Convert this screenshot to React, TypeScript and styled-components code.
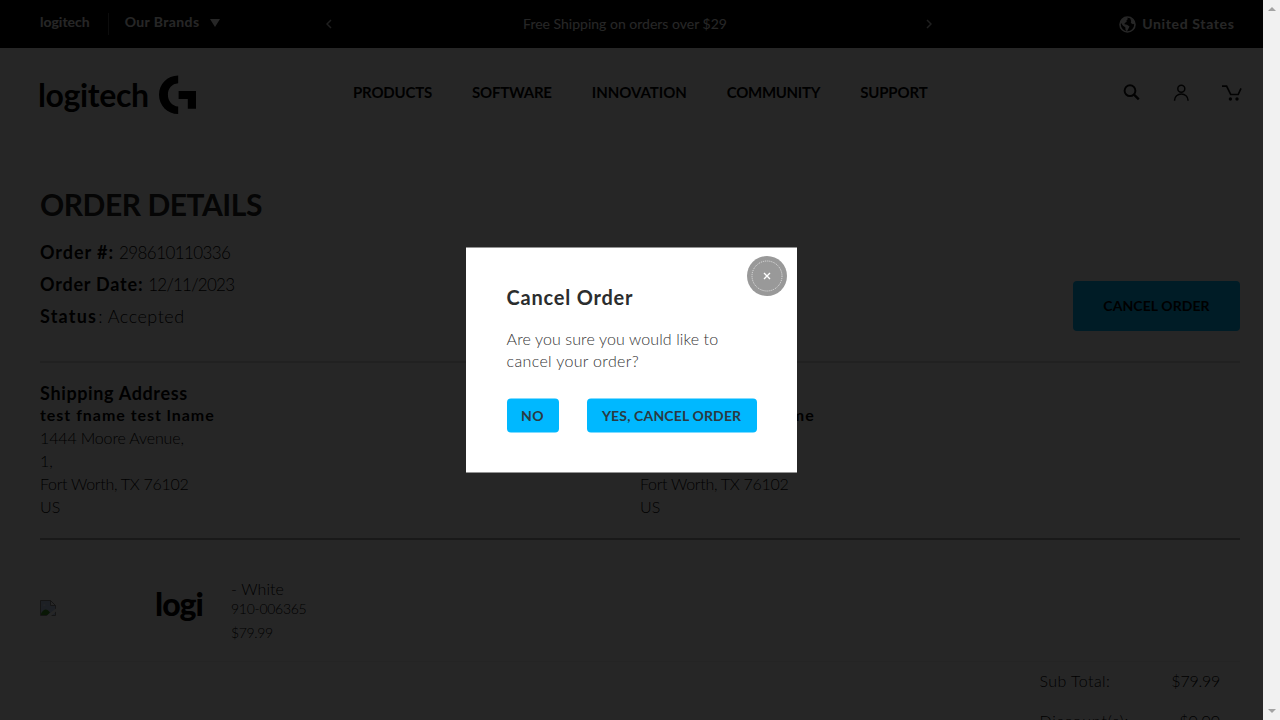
import React from "react";
import styled, { createGlobalStyle } from "styled-components";

const GlobalStyle = createGlobalStyle`
  * { box-sizing: border-box; }
  body { margin: 0; overflow: hidden; background: #fff; }
  button { cursor: pointer; }
`;

const Frame = styled.div`
  display: flex;
  width: 1280px;
  height: 720px;
  overflow: hidden;
  font-family: Lato, "Liberation Sans", sans-serif;
  color: #000;
`;

const Viewport = styled.div`
  position: relative;
  flex: 1;
  height: 720px;
  overflow: hidden;
  background: #fff;
`;

const Scrollbar = styled.div`
  display: flex;
  flex-direction: column;
  justify-content: space-between;
  align-items: center;
  width: 17px;
  padding: 7px 0;
  background: #f1f1f1;
`;

const Label = styled.span<{ $size?: number; $weight?: number; $track?: number; $line?: number }>`
  display: inline-block;
  white-space: pre;
  font-size: ${(p) => p.$size ?? 16}px;
  font-weight: ${(p) => p.$weight ?? 300};
  letter-spacing: ${(p) => p.$track ?? 0}px;
  line-height: ${(p) => p.$line ?? 23}px;
`;

const TopBar = styled.div`
  display: flex;
  height: 48px;
  padding: 0 28px 0 40px;
  background: #000;
  color: #fff;
`;

const Brands = styled.div`
  display: flex;
  align-items: flex-start;
  width: 286px;
  padding-top: 13px;
`;

const BrandRule = styled.div`
  width: 1px;
  height: 22px;
  margin: 0 16px 0 18px;
  background: #555;
`;

const Caret = styled.div`
  margin: 6px 0 0 11px;
  border: 5px solid transparent;
  border-top: 8px solid #fff;
  border-bottom: 0;
`;

const Promo = styled.div`
  display: flex;
  align-items: center;
  justify-content: space-between;
  width: 606px;
`;

const PromoText = styled.div`
  padding: 0 8px 2px 0;
`;

const Region = styled.div`
  display: flex;
  align-items: center;
  gap: 6px;
  margin-left: auto;
  padding: 0 0.5px 0 0;
`;

const RegionName = styled.div`
  padding-bottom: 1px;
`;

const Header = styled.header`
  display: flex;
  height: 138px;
  padding-left: 40px;
`;

const Logo = styled.div`
  display: flex;
  align-items: flex-start;
  width: 313px;
  padding-top: 27px;
`;

const Wordmark = styled.div`
  width: 121px;
  margin-left: -2px;
  padding-top: 1px;
`;

const Nav = styled.nav`
  display: flex;
  gap: 40px;
  padding-top: 34px;
`;

const Tools = styled.div`
  display: flex;
  gap: 31.5px;
  margin-left: auto;
  padding: 35px 21px 0 0;
`;

const Main = styled.main`
  padding: 0 23px 0 40px;
`;

const Title = styled.h1`
  margin: 0 0 14px;
  font-size: 30px;
  line-height: 36px;
  font-weight: 700;
  letter-spacing: -0.46px;
  color: #222;
`;

const Summary = styled.section`
  display: flex;
  justify-content: space-between;
  align-items: flex-end;
  height: 96px;
  margin-bottom: 29px;
`;

const Fact = styled.div`
  display: flex;
  align-items: baseline;
  gap: 1px;
  height: 32px;
`;

const CancelButton = styled.button`
  width: 167px;
  height: 50px;
  margin-bottom: 1px;
  padding: 0;
  border: 0;
  border-radius: 4px;
  background: #00b8fc;
  color: #000;
  font-family: inherit;
`;

const Rule = styled.hr<{ $shade: string; $size: number }>`
  height: ${(p) => p.$size}px;
  margin: 0;
  border: 0;
  background: ${(p) => p.$shade};
`;

const Addresses = styled.section`
  display: grid;
  grid-template-columns: 600px 600px;
  margin-top: 19px;
`;

const Address = styled.address`
  display: flex;
  flex-direction: column;
  align-items: flex-start;
  height: 156px;
  font-style: normal;
`;

const Item = styled.section`
  display: flex;
  height: 121px;
`;

const Thumb = styled.div`
  width: 115px;
  padding-top: 60px;
`;

const Vendor = styled.div`
  width: 76px;
  padding-top: 45px;
`;

const ItemText = styled.div`
  display: flex;
  flex-direction: column;
  padding-top: 38px;
`;

const Totals = styled.div`
  display: flex;
  flex-direction: column;
  width: 240.500px;
  margin-left: auto;
  padding: 0 20px 0 40px;
`;

const TotalRow = styled.div`
  display: flex;
  justify-content: space-between;
  height: 40px;
`;

const Overlay = styled.div`
  position: absolute;
  inset: 0;
  background: rgba(0, 0, 0, 0.85);
`;

const Dialog = styled.div`
  position: absolute;
  top: 50%;
  left: 466px;
  transform: translateY(-50%);
  width: 331.4px;
  height: 225px;
  padding: 37px 40px 0 40.6px;
  background: #fff;
  color: #2b2d2e;
`;

const DialogTitle = styled.h2`
  margin: 0 0 19px;
  font-size: 20px;
  line-height: 24px;
  font-weight: 700;
  letter-spacing: 0.78px;
`;

const Message = styled.p`
  display: flex;
  flex-direction: column;
  margin: 0 0 26.5px;
  color: #333;
`;

const Actions = styled.div`
  display: flex;
  gap: 28px;
`;

const Action = styled.button<{ $width: number }>`
  width: ${(p) => p.$width}px;
  height: 34px;
  padding: 0;
  border: 0;
  border-radius: 4px;
  background: #00b8ff;
  color: #2b3a42;
  font-family: inherit;
`;

const Close = styled.button`
  position: absolute;
  top: 8.5px;
  right: 10.7px;
  width: 40px;
  height: 40px;
  padding: 0;
  border: 0;
  background: none;
  svg { display: block; overflow: visible; }
`;

const Chevron = ({ right }: { right?: boolean }) => (
  <svg width="6" height="10" viewBox="0 0 6 10" fill="none" stroke="#ccc" strokeWidth="1.5">
    <path d={right ? "M1 1l4 4-4 4" : "M5 1L1 5l4 4"} />
  </svg>
);

const Globe = () => (
  <svg width="17" height="17" viewBox="0 0 17 17">
    <circle cx="8.5" cy="8.5" r="7.5" fill="none" stroke="#fff" strokeWidth="1.6" />
    <path fill="#fff" d="M3 3.4L7.600 1l1.300 2.100-1.500 1.300.300 1.300-1.900 1.200-.4 1.400 2.600.5 2.500 1.700-1.200 2.500-1.400 2.400-1.400-1.600-.2-2.600L4 9.700 1.600 6.200zM11 2l3.600 2.600 1 3-1.600.6-2.200-1.300.4-2z" />
  </svg>
);

const GMark = () => (
  <svg width="38" height="40" viewBox="0 0 38 40">
    <path d="M19.200.6v7.700C13 8.800 8.900 13.500 8.900 19.800S13 31 19.200 31.600v7.500C8.300 39 0 30.500 0 19.800S8.300.7 19.200.6zM19.600 16H37v17.700h-8.200V24h-9.200z" />
  </svg>
);

const SearchIcon = () => (
  <svg width="18" height="18" viewBox="0 0 18 18" fill="none" stroke="#111" strokeWidth="2">
    <circle cx="7" cy="7.7" r="5.4" />
    <path d="M11 11.700l4.800 4.700" strokeWidth="2.4" />
  </svg>
);

const UserIcon = () => (
  <svg width="18" height="18" viewBox="0 0 18 18" fill="none" stroke="#111" strokeWidth="1.5">
    <circle cx="8.3" cy="5.8" r="3.5" />
    <path d="M1.600 17.800v-.8a6.700 6 0 0 1 13.400 0v.8" />
  </svg>
);

const CartIcon = () => (
  <svg width="20" height="18" viewBox="0 0 20 18" fill="none" stroke="#111" strokeWidth="1.7">
    <path d="M0 3.200h4.600l4.100 8.300h7.500l2.800-6.200" />
    <circle cx="8.4" cy="16" r="1.7" fill="#111" stroke="none" />
    <circle cx="15" cy="16" r="1.7" fill="#111" stroke="none" />
  </svg>
);

const BrokenImage = () => (
  <svg width="16" height="16" viewBox="0 0 16 16">
    <path d="M.5.500h10l5 5v10H.5z" fill="#c3d4f5" stroke="#8c8c8c" />
    <path d="M10.500.500v5h5z" fill="#fff" stroke="#8c8c8c" />
    <path d="M3 5.500c.3-1.300 2.300-1.300 2.700 0z" fill="#fff" />
    <path d="M1 15v-1.500c3-5 6-5 9-1L7.500 15z" fill="#3c9b23" />
    <path d="M6.500 16L16 8.500v3L11 16z" fill="#fff" />
  </svg>
);

const ScrollArrow = ({ down }: { down?: boolean }) => (
  <svg width="8" height="4" viewBox="0 0 8 4">
    <path d={down ? "M0 0h8L4 4z" : "M0 4h8L4 0z"} fill="#a3a3a3" />
  </svg>
);

const menu: [string, number][] = [
  ["PRODUCTS", -0.19],
  ["SOFTWARE", -0.24],
  ["INNOVATION", -0.03],
  ["COMMUNITY", -0.3],
  ["SUPPORT", -0.15],
];

const AddressBlock = ({ heading }: { heading: string }) => (
  <Address>
    <Label $size={18} $weight={700} $track={0.64} $line={22}>{heading}</Label>
    <Label $weight={700} $track={0.97} $line={22}>test fname test lname</Label>
    <Label $track={-0.15}>1444 Moore Avenue,</Label>
    <Label>1,</Label>
    <Label $track={-0.28}>Fort Worth, TX 76102</Label>
    <Label>US</Label>
  </Address>
);

export default function App() {
  return (
    <Frame>
      <GlobalStyle />
      <Viewport>
        <TopBar>
          <Brands>
            <Label $size={14} $weight={700} $line={18}>logitech</Label>
            <BrandRule />
            <Label $size={14} $weight={700} $track={0.4} $line={18}>Our Brands</Label>
            <Caret />
          </Brands>
          <Promo>
            <Chevron />
            <PromoText>
              <Label $size={14} $weight={400}>Free Shipping on orders over $29</Label>
            </PromoText>
            <Chevron right />
          </Promo>
          <Region>
            <Globe />
            <RegionName>
              <Label $size={14} $weight={700} $track={0.64}>United States</Label>
            </RegionName>
          </Region>
        </TopBar>
        <Header>
          <Logo>
            <Wordmark>
              <Label $size={32} $weight={700} $track={-0.36} $line={38}>logitech</Label>
            </Wordmark>
            <GMark />
          </Logo>
          <Nav>
            {menu.map(([name, track]) => (
              <Label key={name} $size={15} $weight={700} $track={track} $line={20}>{name}</Label>
            ))}
          </Nav>
          <Tools>
            <SearchIcon />
            <UserIcon />
            <CartIcon />
          </Tools>
        </Header>
        <Main>
          <Title>ORDER DETAILS</Title>
          <Summary>
            <div>
              <Fact>
                <Label $size={18} $weight={700} $track={0.95} $line={32}>{"Order #:"}</Label>
                <Label $size={17} $track={-0.6} $line={32}>{" 298610110336"}</Label>
              </Fact>
              <Fact>
                <Label $size={18} $weight={700} $track={0.78} $line={32}>{"Order Date:"}</Label>
                <Label $size={17} $track={-0.76} $line={32}>{" 12/11/2023"}</Label>
              </Fact>
              <Fact>
                <Label $size={18} $weight={700} $track={1.2} $line={32}>Status</Label>
                <Label $size={18} $track={0.5} $line={32}>{": Accepted"}</Label>
              </Fact>
            </div>
            <CancelButton>
              <Label $size={14} $weight={700} $track={0.08} $line={50}>CANCEL ORDER</Label>
            </CancelButton>
          </Summary>
          <Rule $shade="#dcdcdc" $size={2} />
          <Addresses>
            <AddressBlock heading="Shipping Address" />
            <AddressBlock heading="Billing Address" />
          </Addresses>
          <Rule $shade="#a8a8a8" $size={2} />
          <Item>
            <Thumb><BrokenImage /></Thumb>
            <Vendor>
              <Label $size={32} $weight={900} $track={-1} $line={38}>logi</Label>
            </Vendor>
            <ItemText>
              <Label $track={0.11} $line={22}>- White</Label>
              <Label $size={14} $track={-0.28} $line={18}>910-006365</Label>
              <Label $size={14} $track={-0.35} $line={30}>$79.99</Label>
            </ItemText>
          </Item>
          <Rule $shade="#f2f2f2" $size={1} />
          <Totals>
            <TotalRow>
              <Label $track={0.43} $line={37}>Sub Total:</Label>
              <Label $track={-0.25} $line={37}>$79.99</Label>
            </TotalRow>
            <TotalRow>
              <Label $track={0.82} $line={37}>Discount(s):</Label>
              <Label $line={37}>$0.00</Label>
            </TotalRow>
          </Totals>
        </Main>
        <Overlay>
          <Dialog>
            <DialogTitle>Cancel Order</DialogTitle>
            <Message>
              <Label $track={0.11} $line={22}>Are you sure you would like to</Label>
              <Label $track={0.33} $line={22}>cancel your order?</Label>
            </Message>
            <Actions>
              <Action $width={52}>
                <Label $size={14} $weight={700} $track={0.5} $line={34}>NO</Label>
              </Action>
              <Action $width={170}>
                <Label $size={14} $weight={700} $track={0.15} $line={34}>YES, CANCEL ORDER</Label>
              </Action>
            </Actions>
            <Close aria-label="Close">
              <svg width="40" height="40" viewBox="0 0 40 40" fill="none" stroke="#fff">
                <circle cx="20" cy="19.5" r="20" fill="#999" stroke="none" />
                <circle cx="20" cy="19.5" r="15" strokeDasharray="1 1" strokeWidth="0.7" />
                <path d="M17 16.500l6 6M23 16.500l-6 6" strokeWidth="1.4" />
              </svg>
            </Close>
          </Dialog>
        </Overlay>
      </Viewport>
      <Scrollbar>
        <ScrollArrow />
        <ScrollArrow down />
      </Scrollbar>
    </Frame>
  );
}
